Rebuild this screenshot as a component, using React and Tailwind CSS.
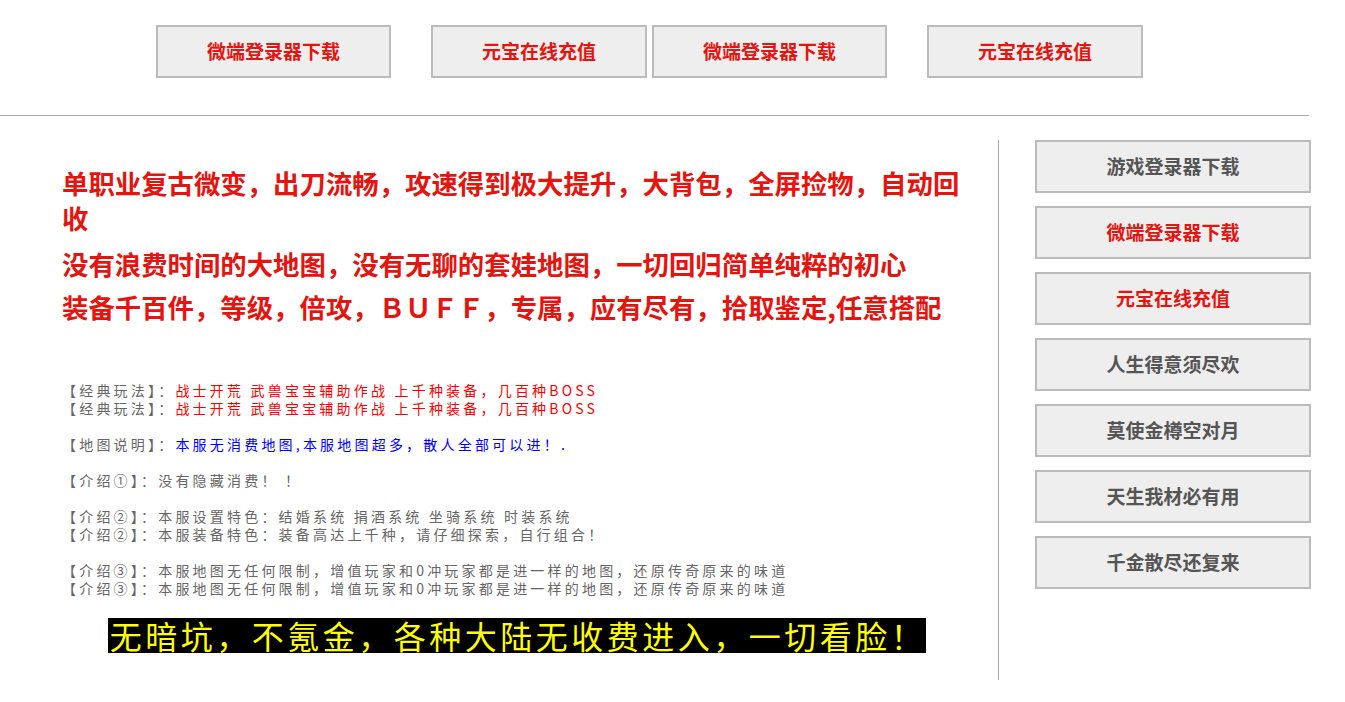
const topLinks = [
  { text: "微端登录器下载", w: "w-[235px]", ml: "ml-[156px]" },
  { text: "元宝在线充值", w: "w-[216px]", ml: "ml-[40px]" },
  { text: "微端登录器下载", w: "w-[235px]", ml: "ml-[5px]" },
  { text: "元宝在线充值", w: "w-[216px]", ml: "ml-[40px]" },
];

const sideLinks = [
  { text: "游戏登录器下载", red: false },
  { text: "微端登录器下载", red: true },
  { text: "元宝在线充值", red: true },
  { text: "人生得意须尽欢", red: false },
  { text: "莫使金樽空对月", red: false },
  { text: "天生我材必有用", red: false },
  { text: "千金散尽还复来", red: false },
];

const cjk = "font-['Microsoft_YaHei','Noto_Sans_CJK_SC',sans-serif]";

function Btn({ text, red, className }) {
  return (
    <a
      href="#"
      className={`flex h-[53px] items-center justify-center border-2 border-[#bbbbbb] bg-[#eeeeee] text-[19px] font-bold ${
        red ? "text-[#e5140f]" : "text-[#555555]"
      } ${className}`}
    >
      {text}
    </a>
  );
}

function Label({ children }) {
  return <span className="text-[#666666]">{children}</span>;
}

export default function App() {
  return (
    <div className={`min-h-[702px] w-full overflow-hidden bg-white ${cjk}`}>
      <div className="flex pt-[25px]">
        {topLinks.map((l, i) => (
          <Btn key={i} text={l.text} red className={`${l.w} ${l.ml}`} />
        ))}
      </div>

      <div className="mt-[37px] h-px w-[1309px] bg-[#aaaaaa]" />

      <div className="mt-[24px] flex">
        <div className="h-[540px] w-[999px] border-r border-[#aaaaaa] pl-[62px] pt-[25px]">
          <div className="w-[910px] text-[26.4px] font-bold leading-[35px] text-[#e5140f]">
            <p>单职业复古微变，出刀流畅，攻速得到极大提升，大背包，全屏捡物，自动回收</p>
            <p className="mt-[11px]">没有浪费时间的大地图，没有无聊的套娃地图，一切回归简单纯粹的初心</p>
            <p className="mt-[8px]">装备千百件，等级，倍攻，ＢＵＦＦ，专属，应有尽有，拾取鉴定,任意搭配</p>
          </div>

          <div className="mt-[57px] text-[14px] leading-[18px] tracking-[3.2px] text-[#666666]">
            <div>
              <Label>【经典玩法】：</Label>
              <span className="text-[#ff0000]">战士开荒 武兽宝宝辅助作战 上千种装备，几百种BOSS</span>
            </div>
            <div>
              <Label>【经典玩法】：</Label>
              <span className="text-[#ff0000]">战士开荒 武兽宝宝辅助作战 上千种装备，几百种BOSS</span>
            </div>
            <div className="h-[18px]" />
            <div>
              <Label>【地图说明】：</Label>
              <span className="text-[#0000ff]">本服无消费地图,本服地图超多，散人全部可以进！.</span>
            </div>
            <div className="h-[18px]" />
            <div>【介绍①】：没有隐藏消费！ ！</div>
            <div className="h-[18px]" />
            <div>【介绍②】：本服设置特色：结婚系统 捐酒系统 坐骑系统 时装系统</div>
            <div>【介绍②】：本服装备特色：装备高达上千种，请仔细探索，自行组合！</div>
            <div className="h-[18px]" />
            <div>【介绍③】：本服地图无任何限制，增值玩家和0冲玩家都是进一样的地图，还原传奇原来的味道</div>
            <div>【介绍③】：本服地图无任何限制，增值玩家和0冲玩家都是进一样的地图，还原传奇原来的味道</div>
          </div>

          <div className="mt-[21px] flex w-[910px] justify-center">
            <span className="block h-[35px] bg-black pl-[2px] text-[32px] font-normal leading-[35px] tracking-[3.5px] text-[#ffff00]">
              无暗坑，不氪金，各种大陆无收费进入，一切看脸！
            </span>
          </div>
        </div>

        <div className="flex flex-col gap-[13px] pl-[36px]">
          {sideLinks.map((l, i) => (
            <Btn key={i} text={l.text} red={l.red} className="w-[276px]" />
          ))}
        </div>
      </div>
    </div>
  );
}
